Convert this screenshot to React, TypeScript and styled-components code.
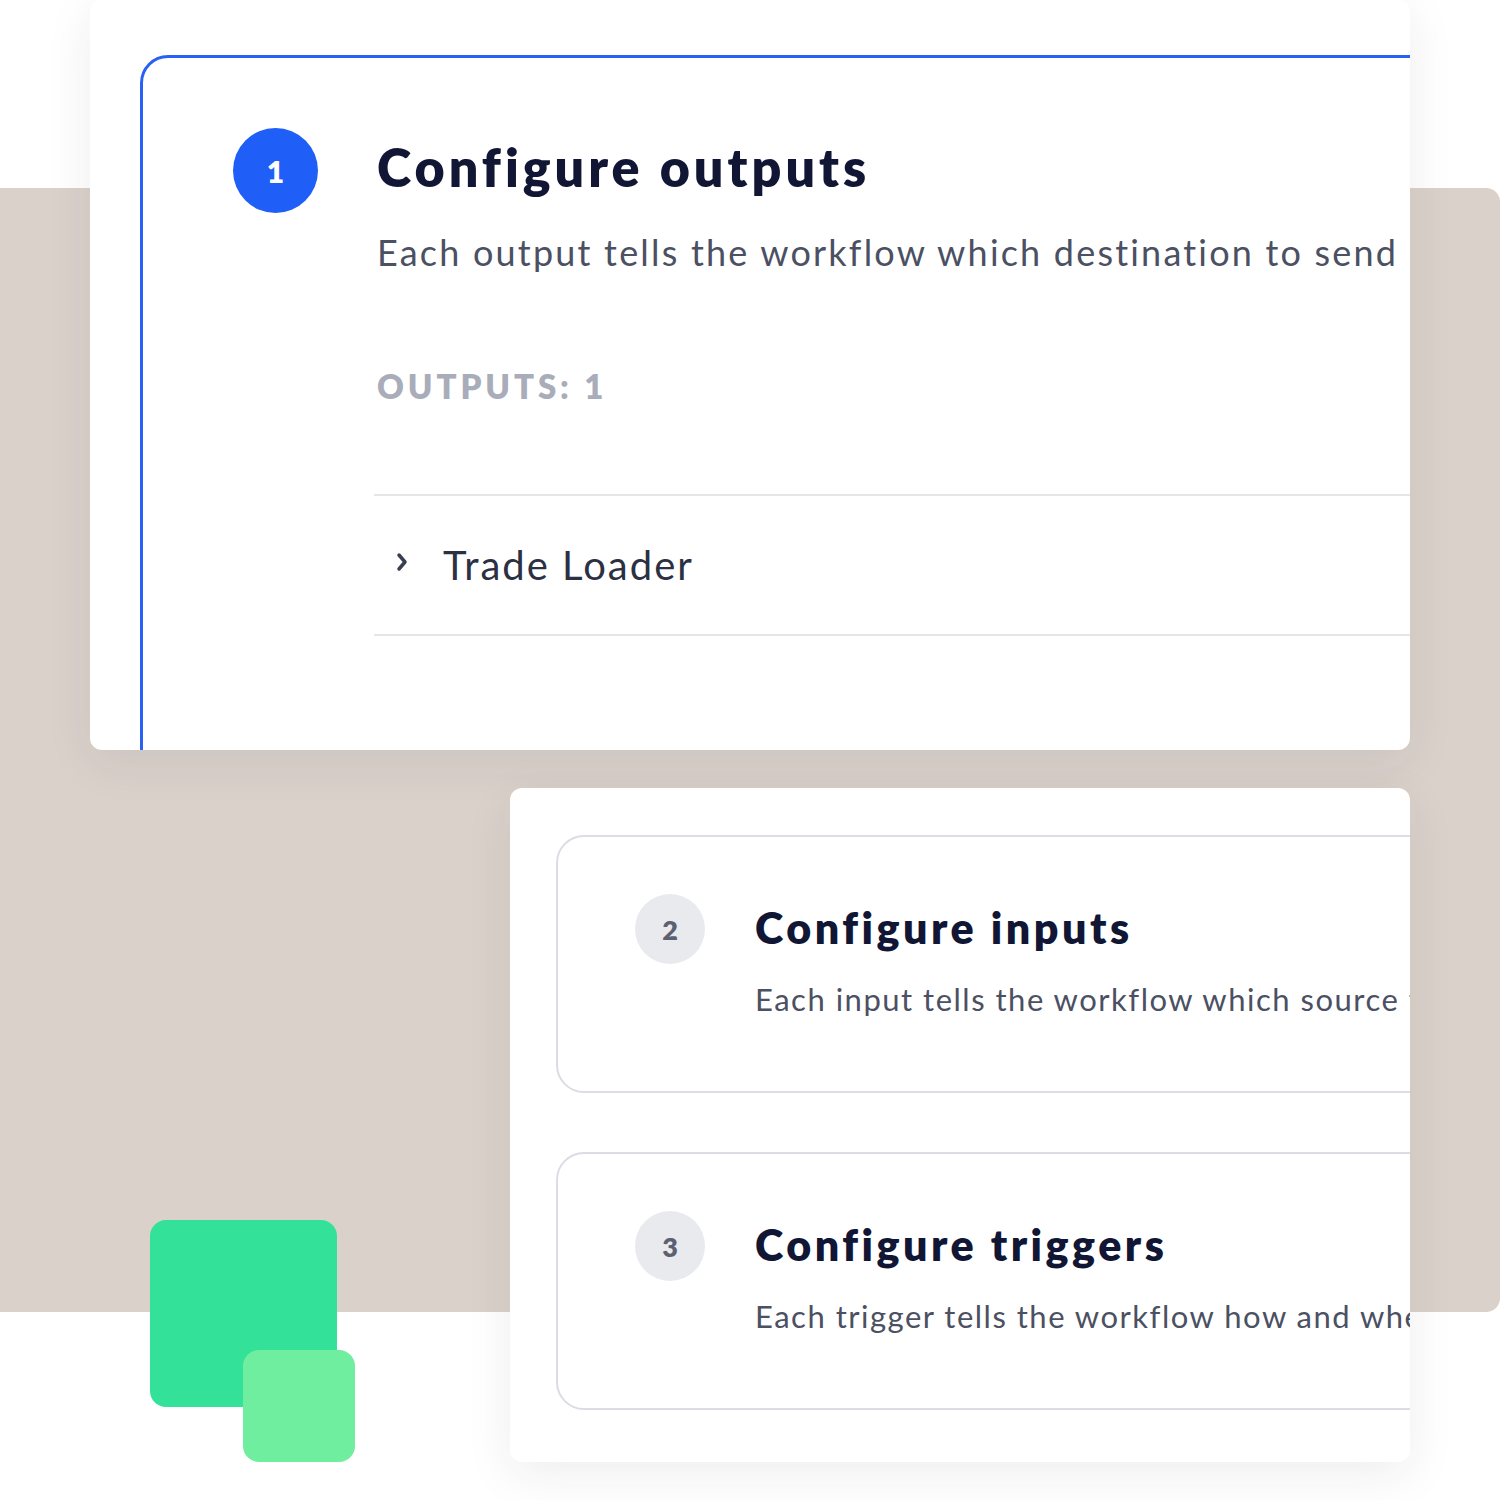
import React from "react";
import styled, { createGlobalStyle } from "styled-components";

const Global = createGlobalStyle`
  html, body { margin: 0; padding: 0; background: #ffffff; }
  body { font-family: Lato, "Open Sans", sans-serif; }
`;

const Canvas = styled.div`
  position: relative;
  width: 1500px;
  height: 1500px;
  overflow: hidden;
  background: #ffffff;
`;

const Backdrop = styled.div`
  position: absolute;
  left: -20px;
  top: 188px;
  width: 1520px;
  height: 1124px;
  background: #dad1ca;
  border-radius: 14px;
`;

const Card = styled.div<{ $left: number; $top: number; $width: number; $height: number; $pad: string }>`
  position: absolute;
  left: ${(p) => p.$left}px;
  top: ${(p) => p.$top}px;
  width: ${(p) => p.$width}px;
  height: ${(p) => p.$height}px;
  background: #ffffff;
  border-radius: 12px;
  box-shadow: 0 12px 48px rgba(40, 40, 60, 0.08);
  overflow: hidden;
  box-sizing: border-box;
  padding: ${(p) => p.$pad};
  display: flex;
  flex-direction: column;
  gap: 59px;
`;

const Panel = styled.section<{ $active?: boolean }>`
  box-sizing: border-box;
  width: ${(p) => (p.$active ? "1400px" : "1000px")};
  flex: none;
  border: ${(p) => (p.$active ? "3px solid #2a60f4" : "2px solid #dcdce4")};
  border-radius: 28px;
  display: flex;
  align-items: flex-start;
  padding: ${(p) => (p.$active ? "70px 0 0 90px" : "57px 0 0 77px")};
  height: ${(p) => (p.$active ? "760px" : "258px")};
`;

const StepBadge = styled.div<{ $active?: boolean }>`
  flex: none;
  width: ${(p) => (p.$active ? 85 : 70)}px;
  height: ${(p) => (p.$active ? 85 : 70)}px;
  border-radius: 50%;
  background: ${(p) => (p.$active ? "#1f5ef7" : "#e9eaee")};
  color: ${(p) => (p.$active ? "#ffffff" : "#5c6172")};
  display: flex;
  align-items: center;
  justify-content: center;
  font-family: Lato, sans-serif;
  font-weight: 800;
  font-size: ${(p) => (p.$active ? 30 : 27)}px;
`;

const Body = styled.div<{ $active?: boolean }>`
  display: flex;
  flex-direction: column;
  margin-left: ${(p) => (p.$active ? 59 : 50)}px;
  flex: 1;
  min-width: 0;
`;

const Title = styled.h2<{ $active?: boolean }>`
  margin: 8px 0 0;
  font-family: Lato, sans-serif;
  font-weight: 800;
  font-size: ${(p) => (p.$active ? 52 : 43)}px;
  line-height: 1.2;
  color: #101634;
  letter-spacing: ${(p) => (p.$active ? 4 : 3.5)}px;
  white-space: nowrap;
`;

const Desc = styled.p<{ $active?: boolean }>`
  margin: ${(p) => (p.$active ? "33px 0 0" : "27px 0 0")};
  font-family: Lato, sans-serif;
  font-weight: 400;
  font-size: ${(p) => (p.$active ? 36 : 31)}px;
  line-height: 1.2;
  letter-spacing: ${(p) => (p.$active ? 2.2 : 1.5)}px;
  color: #4b5062;
  white-space: nowrap;
`;

const Clip = styled.div<{ $width: number }>`
  width: ${(p) => p.$width}px;
  overflow: hidden;
`;

const Label = styled.div`
  margin-top: 92px;
  font-family: Lato, sans-serif;
  font-weight: 800;
  font-size: 33px;
  line-height: 1.2;
  letter-spacing: 3.9px;
  color: #a9adb9;
`;

const List = styled.div`
  margin-top: 88px;
  margin-left: -3px;
  border-top: 2px solid #e6e6ea;
  border-bottom: 2px solid #e6e6ea;
`;

const Row = styled.div`
  height: 138px;
  display: flex;
  align-items: center;
  gap: 33px;
  padding-left: 20px;
  font-family: Lato, sans-serif;
  font-size: 40px;
  line-height: 48px;
  letter-spacing: 2px;
  color: #2b3042;
`;

const Chevron = styled.svg`
  width: 16px;
  height: 22px;
  margin-top: -6px;
`;

const Square = styled.div<{ $left: number; $top: number; $size: number; $color: string }>`
  position: absolute;
  left: ${(p) => p.$left}px;
  top: ${(p) => p.$top}px;
  width: ${(p) => p.$size}px;
  height: ${(p) => p.$size}px;
  background: ${(p) => p.$color};
  border-radius: 16px;
`;

export default function App() {
  return (
    <>
      <Global />
      <Canvas>
        <Backdrop />
        <Card $left={90} $top={0} $width={1320} $height={750} $pad="55px 0 0 50px">
          <Panel $active>
            <StepBadge $active>1</StepBadge>
            <Body $active>
              <Title $active>Configure outputs</Title>
              <Clip $width={1026}>
                <Desc $active>Each output tells the workflow which destination to send data to</Desc>
              </Clip>
              <Label>OUTPUTS: 1</Label>
              <List>
                <Row>
                  <Chevron viewBox="0 0 16 22">
                    <path d="M5 4 L11 11 L5 18" fill="none" stroke="#3a3f50" strokeWidth="3.5" strokeLinecap="round" strokeLinejoin="round" />
                  </Chevron>
                  Trade Loader
                </Row>
              </List>
            </Body>
          </Panel>
        </Card>
        <Card $left={510} $top={788} $width={900} $height={674} $pad="47px 0 0 46px">
          <Panel>
            <StepBadge>2</StepBadge>
            <Body>
              <Title>Configure inputs</Title>
              <Desc>Each input tells the workflow which source to read from</Desc>
            </Body>
          </Panel>
          <Panel>
            <StepBadge>3</StepBadge>
            <Body>
              <Title>Configure triggers</Title>
              <Desc>Each trigger tells the workflow how and when to run</Desc>
            </Body>
          </Panel>
        </Card>
        <Square $left={150} $top={1220} $size={187} $color="#33e298" />
        <Square $left={243} $top={1350} $size={112} $color="#6fee9f" />
      </Canvas>
    </>
  );
}
